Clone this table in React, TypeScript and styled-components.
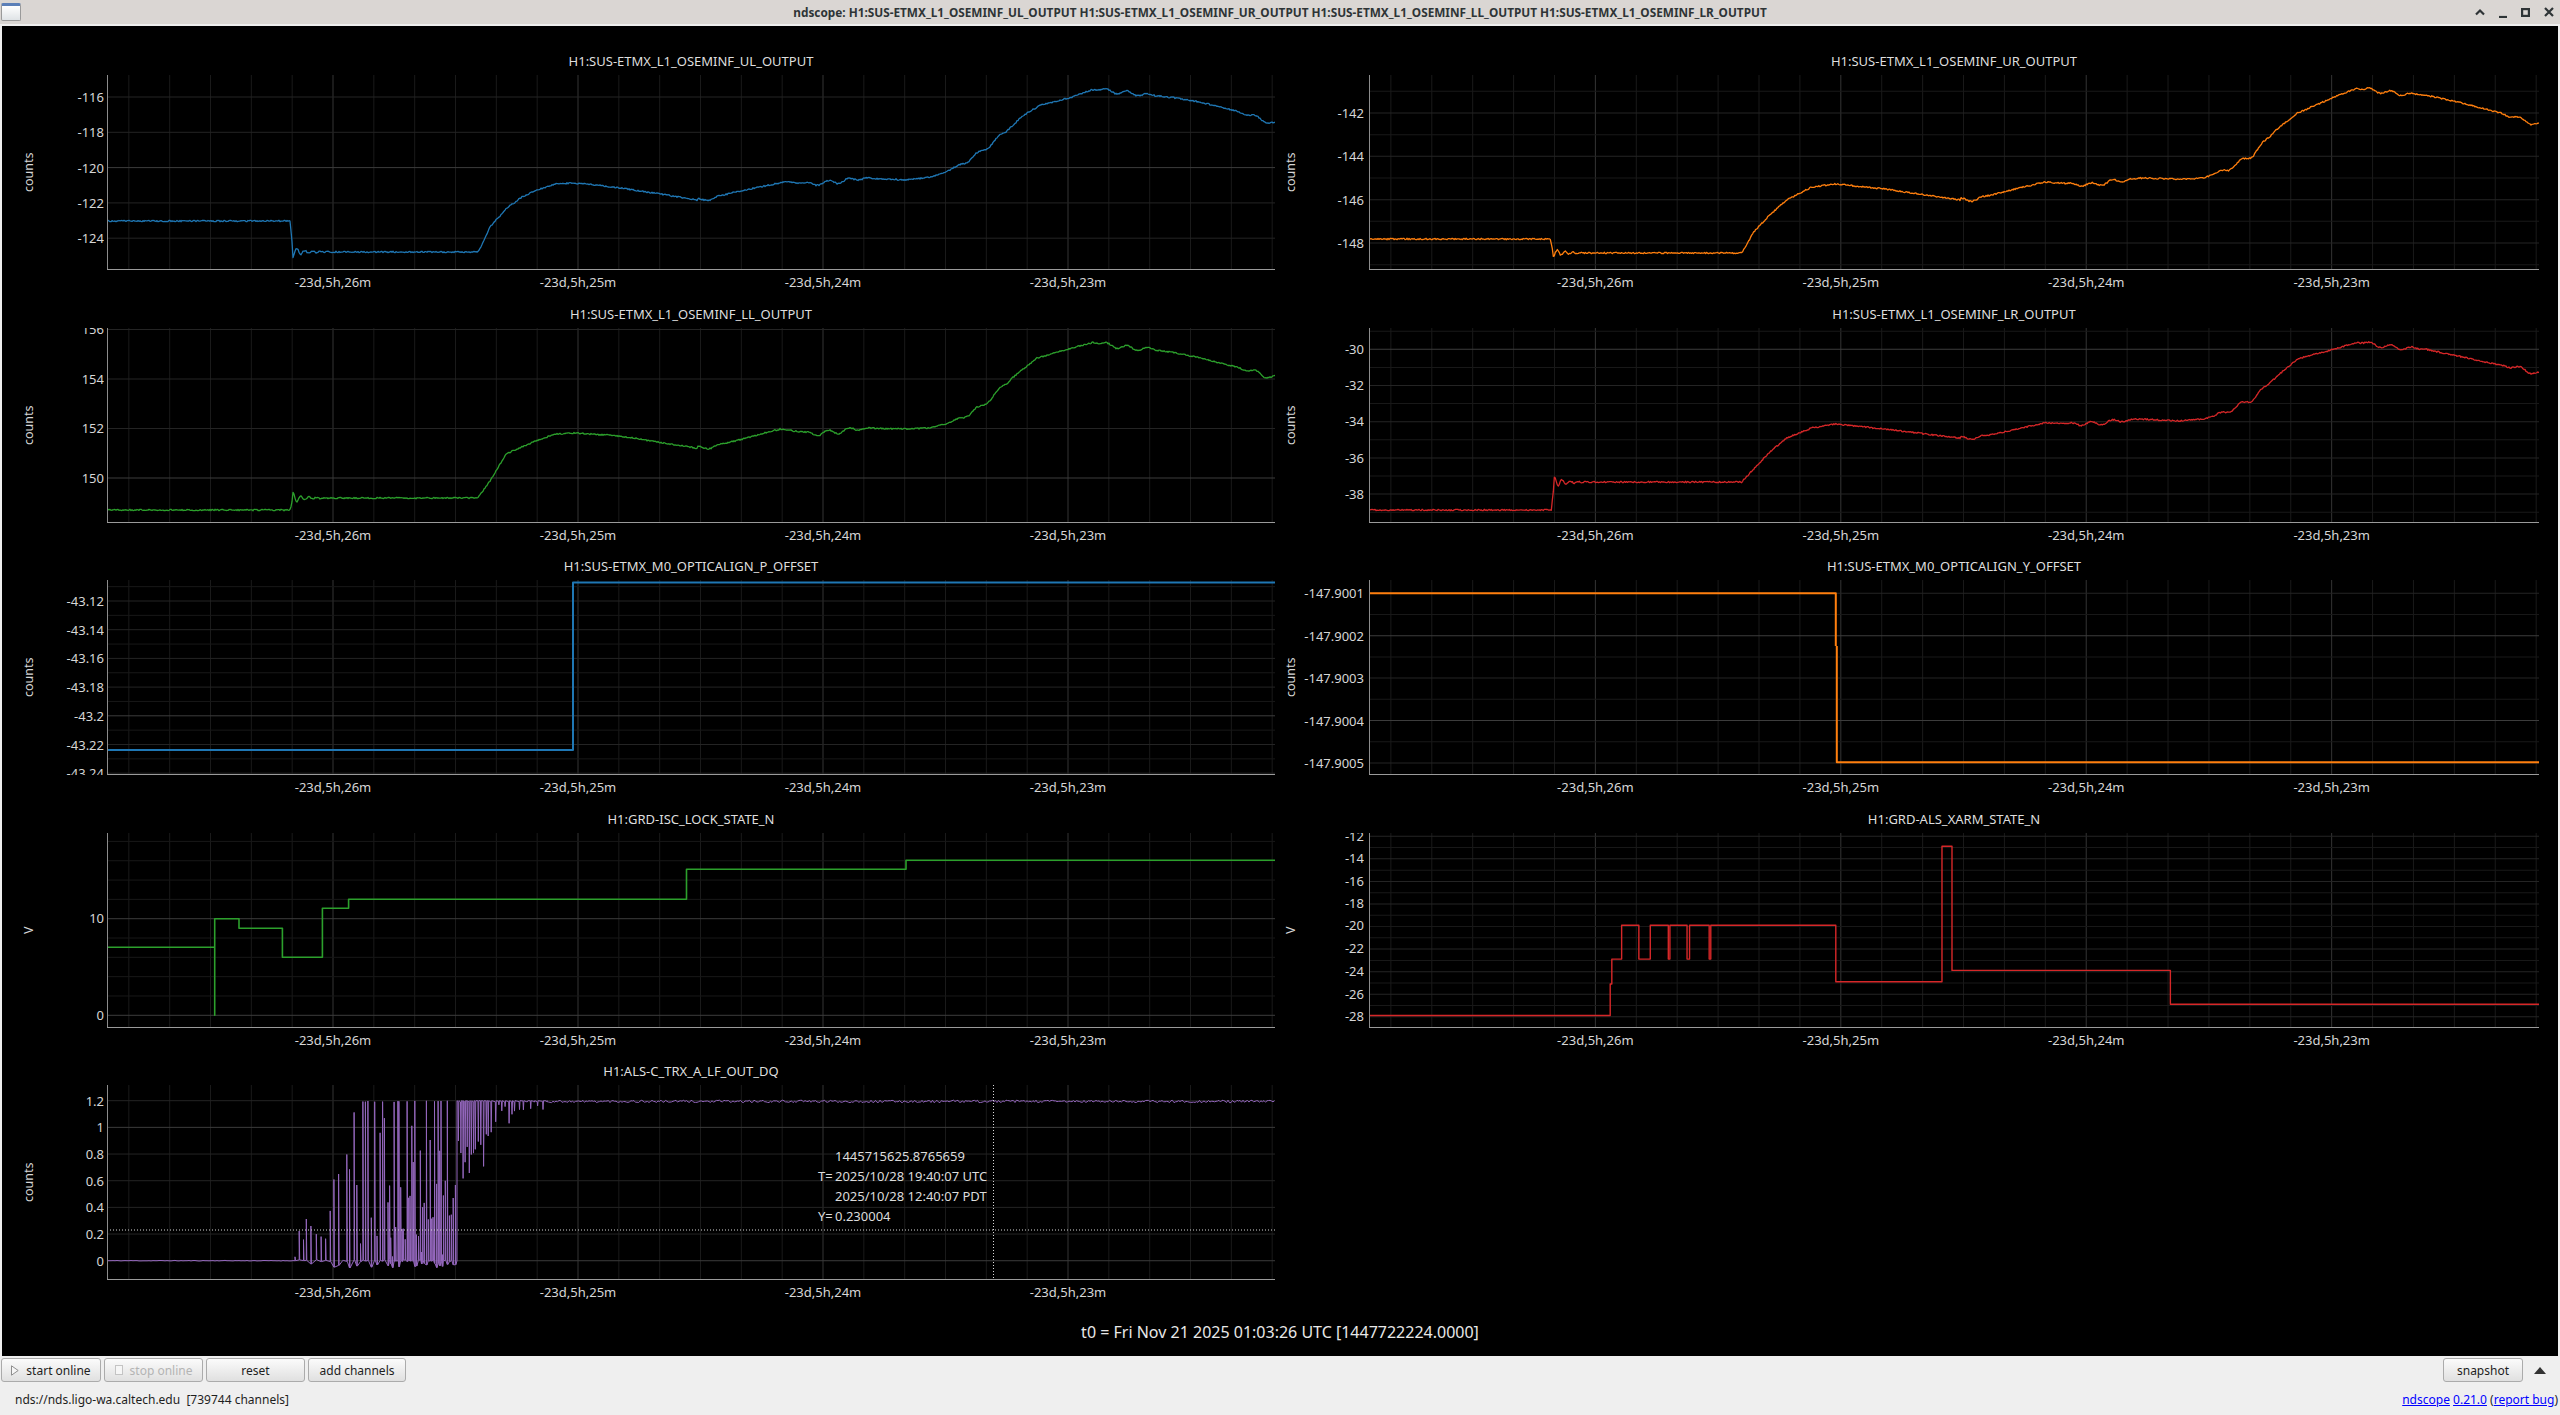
import React from 'react';
import styled, { createGlobalStyle } from 'styled-components';

const BASE_W = 1168;
const PLOT_H = 195;
const MINUTE_X = [226, 471, 716, 961];
const X_LABELS = ['-23d,5h,26m', '-23d,5h,25m', '-23d,5h,24m', '-23d,5h,23m'];

const BLUE = '#1f77b4';
const ORANGE = '#ff7f0e';
const GREEN = '#2ca02c';
const RED = '#d62728';
const PURPLE = '#9467bd';

type Tick = [string, number];

type PlotSpec = {
  title: string;
  unit: string;
  color: string;
  ticks: Tick[];
  step: number;
  majors: number[];
  path: string;
  strokeWidth: number;
  cursor?: boolean;
};

function mulberry(seed: number) {
  let a = seed;
  return () => {
    a = (a + 0x6d2b79f5) | 0;
    let t = Math.imul(a ^ (a >>> 15), 1 | a);
    t = (t + Math.imul(t ^ (t >>> 7), 61 | t)) ^ t;
    return ((t ^ (t >>> 14)) >>> 0) / 4294967296;
  };
}

function lerp(keys: number[][], x: number) {
  for (let i = 1; i < keys.length; i++) {
    if (x <= keys[i][0]) {
      const [x0, y0] = keys[i - 1];
      const [x1, y1] = keys[i];
      const t = x1 === x0 ? 1 : (x - x0) / (x1 - x0);
      return y0 + (y1 - y0) * t;
    }
  }
  return keys[keys.length - 1][1];
}

// slow drifting OSEM signal with a step, ringing and little wiggles
function drift(keys: number[][], seed: number, stepX: number, ring: number, wig: number) {
  const r = mulberry(seed);
  let d = '';
  for (let x = 0; x <= BASE_W; x += 1) {
    let y = lerp(keys, x) + (r() - 0.5) * 1.4;
    if (x >= stepX) {
      const dx = x - stepX;
      y += ring * Math.exp(-dx / 11) * Math.cos(dx * 0.8);
    }
    if (x > 590) y += wig * Math.sin(x / 3.4) * Math.max(0, Math.sin(x / 23 + 1.3));
    d += (x === 0 ? 'M' : 'L') + x + ' ' + y.toFixed(1);
  }
  return d;
}

// ALS transmission: sparse flashes while locking, then a steady level
function alsPath() {
  const r = mulberry(11);
  const Y = (v: number) => (175.7 - v * 133.3).toFixed(1);
  let d = `M0 ${Y(0)}`;
  for (let x = 2; x < 188; x += 2) d += `L${x} ${Y((r() - 0.5) * 0.004)}`;
  let x = 188;
  while (x < 349) {
    const base = r() < 0.25 ? -0.02 - r() * 0.035 : (r() - 0.5) * 0.015;
    const env = x < 230 ? 0.18 + ((x - 188) / 42) * 0.5 : x < 250 ? 0.7 + ((x - 230) / 20) * 0.5 : 1.2;
    let h = env * Math.pow(r(), 0.8);
    if (x > 250 && r() < 0.4) h = 1.2 - r() * 0.01;
    if (x > 280 && r() < 0.35) h = r() * 0.5;
    d += `L${x.toFixed(1)} ${Y(base)}L${x.toFixed(1)} ${Y(h)}L${(x + 0.5).toFixed(1)} ${Y(base)}`;
    const gap = x < 250 ? 2.5 + r() * 3 : x < 280 ? 1.8 + r() * 2 : 1 + r() * 1.3;
    x += gap;
  }
  d += `L350 ${Y(0)}L350 ${Y(1.2)}`;
  x = 351;
  while (x < 440) {
    const t = (x - 350) / 90;
    const depth = x < 383 ? 0.25 + r() * 0.35 : x < 415 ? r() * 0.4 * (1 - t) + 0.02 : 0.04 * Math.sin(x) + 0.03;
    d += `L${x.toFixed(1)} ${Y(1.2 - r() * 0.01)}L${(x + 0.4).toFixed(1)} ${Y(1.2 - depth)}L${(x + 0.9).toFixed(1)} ${Y(1.2)}`;
    x += x < 383 ? 1.6 + r() * 1.5 : 2.5 + r() * 3;
  }
  for (let xx = 440; xx <= BASE_W; xx += 1.5) {
    d += `L${xx.toFixed(1)} ${Y(1.195 + (r() - 0.5) * 0.018)}`;
  }
  return d;
}

const UL_KEYS = [
  [0, 146], [183, 146], [186, 177], [371, 177], [375, 170], [383, 152], [400, 133], [415, 122],
  [430, 115], [448, 109], [464, 108], [490, 110], [513, 113], [560, 120], [595, 126], [628, 117],
  [677, 107], [709, 109], [758, 103], [799, 105], [824, 102], [848, 93], [873, 78], [897, 58],
  [917, 40], [934, 30], [962, 23], [987, 14], [1019, 18], [1044, 20], [1069, 23], [1093, 27],
  [1118, 33], [1142, 40], [1168, 49],
];

const UR_KEYS = [
  [0, 164], [181, 164], [184, 178], [372, 178], [384, 157], [400, 140], [417, 125], [442, 112],
  [466, 109], [515, 114], [597, 126], [629, 118], [674, 107], [719, 110], [768, 103], [809, 104],
  [833, 103], [858, 94], [882, 80], [903, 57], [927, 38], [964, 22], [987, 13], [1021, 18],
  [1054, 20], [1087, 27], [1119, 35], [1152, 45], [1168, 50],
];

const LL_KEYS = [
  [0, 182], [183, 182], [186, 170], [371, 170], [383, 153], [399, 126], [424, 115], [448, 106],
  [469, 105], [513, 108], [595, 121], [628, 113], [673, 101], [709, 106], [758, 100], [799, 101],
  [824, 100], [848, 93], [873, 80], [905, 50], [930, 30], [954, 23], [987, 14], [1019, 20],
  [1044, 21], [1069, 25], [1093, 30], [1126, 38], [1168, 50],
];

const LR_KEYS = [
  [0, 182], [182, 182], [185, 154], [372, 154], [384, 141], [400, 124], [417, 110], [442, 100],
  [466, 96], [515, 101], [597, 111], [629, 105], [674, 95], [719, 96], [768, 91], [809, 93],
  [833, 91], [858, 83], [882, 71], [903, 51], [927, 31], [964, 21], [987, 14], [1021, 19],
  [1054, 21], [1087, 28], [1119, 35], [1152, 41], [1168, 46],
];

const xarm = (v: number) => (92.3 + (-20 - v) * 11.28).toFixed(1);

const LEFT: PlotSpec[] = [
  {
    title: 'H1:SUS-ETMX_L1_OSEMINF_UL_OUTPUT', unit: 'counts', color: BLUE,
    ticks: [['-116', 22], ['-118', 57.3], ['-120', 92.6], ['-122', 127.9], ['-124', 163.2]],
    step: 35.3, majors: [92.6], path: drift(UL_KEYS, 1, 186, 5, 2.2), strokeWidth: 1.3,
  },
  {
    title: 'H1:SUS-ETMX_L1_OSEMINF_LL_OUTPUT', unit: 'counts', color: GREEN,
    ticks: [['156', 1.5], ['154', 51], ['152', 100.5], ['150', 150]],
    step: 49.5, majors: [150], path: drift(LL_KEYS, 3, 186, -5, 2.4), strokeWidth: 1.3,
  },
  {
    title: 'H1:SUS-ETMX_M0_OPTICALIGN_P_OFFSET', unit: 'counts', color: BLUE,
    ticks: [['-43.12', 21], ['-43.14', 49.7], ['-43.16', 78.4], ['-43.18', 107.1], ['-43.2', 135.8], ['-43.22', 164.5], ['-43.24', 193.2]],
    step: 14.35, majors: [135.8], path: 'M0 170H466V2.5H1168', strokeWidth: 2,
  },
  {
    title: 'H1:GRD-ISC_LOCK_STATE_N', unit: 'V', color: GREEN,
    ticks: [['10', 85.7], ['0', 182.3]],
    step: 19.32, majors: [85.7, 182.3],
    path: 'M0 114.3H107.7V182.3V85.7H132V95.3H175.4V124.3H215.4V75.3H241.6V66.3H579.5V36.3H799V27.3H1168',
    strokeWidth: 1.6,
  },
  {
    title: 'H1:ALS-C_TRX_A_LF_OUT_DQ', unit: 'counts', color: PURPLE,
    ticks: [['1.2', 15.7], ['1', 42.3], ['0.8', 69], ['0.6', 95.7], ['0.4', 122.4], ['0.2', 149], ['0', 175.7]],
    step: 26.67, majors: [42.3, 175.7], path: alsPath(), strokeWidth: 1, cursor: true,
  },
];

const RIGHT: PlotSpec[] = [
  {
    title: 'H1:SUS-ETMX_L1_OSEMINF_UR_OUTPUT', unit: 'counts', color: ORANGE,
    ticks: [['-142', 38], ['-144', 81.3], ['-146', 124.6], ['-148', 168]],
    step: 21.67, majors: [], path: drift(UR_KEYS, 2, 184, 4, 2.2), strokeWidth: 1.3,
  },
  {
    title: 'H1:SUS-ETMX_L1_OSEMINF_LR_OUTPUT', unit: 'counts', color: RED,
    ticks: [['-30', 21.3], ['-32', 57.5], ['-34', 93.7], ['-36', 130], ['-38', 166.2]],
    step: 18.1, majors: [21.3], path: drift(LR_KEYS, 4, 185, -5, 2.2), strokeWidth: 1.3,
  },
  {
    title: 'H1:SUS-ETMX_M0_OPTICALIGN_Y_OFFSET', unit: 'counts', color: ORANGE,
    ticks: [['-147.9001', 13.3], ['-147.9002', 55.7], ['-147.9003', 98.2], ['-147.9004', 140.6], ['-147.9005', 183]],
    step: 21.2, majors: [55.7, 140.6], path: 'M0 13.3H466V66M467 66V182.3H1168', strokeWidth: 2,
  },
  {
    title: 'H1:GRD-ALS_XARM_STATE_N', unit: 'V', color: RED,
    ticks: [['-12', 3.3], ['-14', 25.9], ['-16', 48.4], ['-18', 70.8], ['-20', 92.3], ['-22', 115.3], ['-24', 138], ['-26', 161.3], ['-28', 183.7]],
    step: 11.28, majors: [92.3],
    path:
      `M0 ${xarm(-28)}H240.8V${xarm(-25.2)}H242.4V${xarm(-23)}H252.2V${xarm(-20)}H269.4V${xarm(-23)}` +
      `H280.8V${xarm(-20)}H298.8V${xarm(-23)}H300.4V${xarm(-20)}H317.5V${xarm(-23)}H320V${xarm(-20)}` +
      `H339.6V${xarm(-23)}H341.2V${xarm(-20)}H466V${xarm(-25)}H572V${xarm(-13)}H582V${xarm(-24)}` +
      `H800V${xarm(-27)}H1168`,
    strokeWidth: 1.4,
  },
];

const GlobalStyle = createGlobalStyle`
  html, body {
    margin: 0;
    padding: 0;
    background: #efefef;
  }
  body {
    font-family: "Noto Sans", "Open Sans", sans-serif;
  }
`;

const Window = styled.div`
  background: #efefef;
  display: flex;
  flex-direction: column;
  height: 1415px;
  overflow: hidden;
  width: 2560px;
`;

const TitleBar = styled.header`
  align-items: center;
  background: #dad6d3;
  display: grid;
  flex: none;
  grid-template-columns: 1fr auto 1fr;
  height: 24px;
`;

const AppIcon = styled.div`
  background: linear-gradient(#ffffff, #dfe3e6);
  border: 1px solid #9a9a9a;
  border-radius: 2px;
  border-top: 3px solid #5b7fb8;
  box-sizing: border-box;
  height: 18px;
  margin-left: 1px;
  width: 20px;
`;

const TitleText = styled.div`
  color: #2e3436;
  font-size: 11.8px;
  font-weight: 700;
  white-space: nowrap;
`;

const Controls = styled.div`
  display: flex;
  justify-content: flex-end;
`;

const Control = styled.div`
  align-items: center;
  display: flex;
  height: 24px;
  justify-content: center;
  width: 23px;
`;

const Screen = styled.main`
  background: #000;
  box-sizing: border-box;
  display: flex;
  flex: none;
  flex-direction: column;
  height: 1330px;
  margin: 2px 2px 0;
  padding-top: 10px;
`;

const PlotGrid = styled.div`
  display: grid;
  grid-auto-flow: column;
  grid-template-columns: 1282px 1274px;
  grid-template-rows: repeat(5, 252.5px);
`;

const Panel = styled.section<{ $axis: number; $plot: number }>`
  display: grid;
  grid-template-areas:
    '. title'
    'yaxis plot'
    '. xaxis';
  grid-template-columns: ${({ $axis }) => $axis}px ${({ $plot }) => $plot}px;
  grid-template-rows: 39px ${PLOT_H}px 1fr;
`;

const PlotTitle = styled.div`
  color: #dedede;
  font-size: 13px;
  grid-area: title;
  line-height: 18px;
  padding-top: 16px;
  text-align: center;
  white-space: nowrap;
`;

const YAxis = styled.div`
  display: flex;
  grid-area: yaxis;
`;

const YLabel = styled.div<{ $left: number }>`
  align-items: center;
  color: #d6d6d6;
  display: flex;
  font-size: 12.5px;
  justify-content: center;
  line-height: 14px;
  margin-left: ${({ $left }) => $left}px;
  transform: rotate(180deg);
  width: 14px;
  writing-mode: vertical-rl;
`;

const YTicks = styled.div<{ $pad: number }>`
  flex: 1;
  overflow: hidden;
  position: relative;
  margin-right: ${({ $pad }) => $pad}px;
`;

const YTick = styled.span`
  color: #d6d6d6;
  font-size: 13px;
  line-height: 18px;
  position: absolute;
  right: 0;
  white-space: nowrap;
`;

const PlotArea = styled.div`
  grid-area: plot;
  position: relative;
`;

const XAxis = styled.div`
  grid-area: xaxis;
  position: relative;
`;

const XTick = styled.span`
  color: #d6d6d6;
  font-size: 13px;
  line-height: 18px;
  position: absolute;
  top: 3px;
  transform: translateX(-50%);
  white-space: nowrap;
`;

const CursorLabel = styled.div`
  color: #dcdcdc;
  column-gap: 3px;
  display: grid;
  font-size: 13px;
  grid-template-columns: 14px auto;
  left: 711px;
  line-height: 20px;
  position: absolute;
  top: 60.7px;
  white-space: nowrap;
`;

const T0 = styled.div`
  color: #e8e8e8;
  font-size: 16px;
  line-height: 20px;
  padding-top: 23.5px;
  text-align: center;
`;

const BottomBar = styled.footer`
  display: flex;
  flex: 1;
  flex-direction: column;
`;

const ButtonRow = styled.div`
  align-items: center;
  display: flex;
  gap: 3px;
  height: 24px;
  padding: 2px 6px 0 1px;
`;

const Button = styled.button<{ $w: number }>`
  align-items: center;
  background: linear-gradient(#fbfbfb, #e0e0e0);
  border: 1px solid #ababab;
  border-radius: 3px;
  color: ${({ disabled }) => (disabled ? '#b4b4b4' : '#1e1e1e')};
  display: flex;
  font-family: "Noto Sans", "Open Sans", sans-serif;
  font-size: 12px;
  gap: 7px;
  height: 24px;
  justify-content: center;
  padding: 0;
  width: ${({ $w }) => $w}px;
`;

const Spacer = styled.div`
  flex: 1;
`;

const Expand = styled.div`
  display: flex;
  justify-content: center;
  width: 28px;
`;

const StatusRow = styled.div`
  align-items: center;
  color: #1e1e1e;
  display: flex;
  font-size: 12px;
  justify-content: space-between;
  line-height: 20px;
  padding: 8px 2px 0 15px;
  white-space: pre;
`;

const Link = styled.a`
  color: #0000ff;
  text-decoration: underline;
`;

function Grid({ spec }: { spec: PlotSpec }) {
  const vertical: React.ReactNode[] = [];
  const step10 = 245 / 6;
  for (let j = -6; j < 30; j++) {
    const x = 226 + j * step10;
    if (x < 0 || x > BASE_W) continue;
    const minute = ((j % 6) + 6) % 6 === 0;
    vertical.push(
      <line key={`v${j}`} x1={x} x2={x} y1={0} y2={PLOT_H} stroke={minute ? '#343434' : '#1a1a1a'} strokeWidth={1} />,
    );
  }
  const horizontal: React.ReactNode[] = [];
  const first = spec.ticks[0][1];
  const labelled = spec.ticks.map((t) => t[1]);
  for (let k = -30; k < 60; k++) {
    const y = first + k * spec.step;
    if (y < 0 || y > PLOT_H) continue;
    const isMajor = spec.majors.some((m) => Math.abs(m - y) < 1);
    const isTick = labelled.some((m) => Math.abs(m - y) < 1);
    horizontal.push(
      <line
        key={`h${k}`}
        x1={0}
        x2={BASE_W}
        y1={y}
        y2={y}
        stroke={isMajor ? '#3c3c3c' : isTick ? '#242424' : '#181818'}
        strokeWidth={1}
      />,
    );
  }
  return (
    <g>
      {vertical}
      {horizontal}
    </g>
  );
}

function PlotPanel({ spec, axis, plot, labelLeft, tickPad }: { spec: PlotSpec; axis: number; plot: number; labelLeft: number; tickPad: number }) {
  const sx = plot / BASE_W;
  return (
    <Panel $axis={axis} $plot={plot}>
      <PlotTitle>{spec.title}</PlotTitle>
      <YAxis>
        <YLabel $left={labelLeft}>{spec.unit}</YLabel>
        <YTicks $pad={tickPad}>
          {spec.ticks.map(([label, y]) => (
            <YTick key={label} style={{ top: y - 9 }}>
              {label}
            </YTick>
          ))}
        </YTicks>
      </YAxis>
      <PlotArea>
        <svg width={plot} height={PLOT_H} viewBox={`0 0 ${BASE_W} ${PLOT_H}`} preserveAspectRatio="none" style={{ display: 'block' }}>
          <Grid spec={spec} />
          <path d={spec.path} fill="none" stroke={spec.color} strokeWidth={spec.strokeWidth} strokeLinejoin="round" />
          {spec.cursor && (
            <g stroke="#d8d8d8" strokeWidth={1} strokeDasharray="1 2">
              <line x1={886.5} x2={886.5} y1={0} y2={PLOT_H} />
              <line x1={0} x2={BASE_W} y1={145} y2={145} />
            </g>
          )}
          <line x1={0.5} x2={0.5} y1={0} y2={PLOT_H} stroke="#8c8c8c" strokeWidth={1} />
          <line x1={0} x2={BASE_W} y1={PLOT_H - 0.5} y2={PLOT_H - 0.5} stroke="#9a9a9a" strokeWidth={1.2} />
        </svg>
        {spec.cursor && (
          <CursorLabel>
            <span />
            <span>1445715625.8765659</span>
            <span>T=</span>
            <span>2025/10/28 19:40:07 UTC</span>
            <span />
            <span>2025/10/28 12:40:07 PDT</span>
            <span>Y=</span>
            <span>0.230004</span>
          </CursorLabel>
        )}
      </PlotArea>
      <XAxis>
        {MINUTE_X.map((x, i) => (
          <XTick key={X_LABELS[i]} style={{ left: x * sx }}>
            {X_LABELS[i]}
          </XTick>
        ))}
      </XAxis>
    </Panel>
  );
}

export default function App() {
  return (
    <>
      <GlobalStyle />
      <Window>
        <TitleBar>
          <AppIcon />
          <TitleText>
            ndscope: H1:SUS-ETMX_L1_OSEMINF_UL_OUTPUT H1:SUS-ETMX_L1_OSEMINF_UR_OUTPUT H1:SUS-ETMX_L1_OSEMINF_LL_OUTPUT
            H1:SUS-ETMX_L1_OSEMINF_LR_OUTPUT
          </TitleText>
          <Controls>
            <Control>
              <svg width="10" height="8" viewBox="0 0 10 8">
                <path d="M1 6.5L5 2.5L9 6.5" fill="none" stroke="#2e3436" strokeWidth="2.2" />
              </svg>
            </Control>
            <Control>
              <svg width="10" height="12" viewBox="0 0 10 12">
                <path d="M1 11H9" fill="none" stroke="#2e3436" strokeWidth="2.2" />
              </svg>
            </Control>
            <Control>
              <svg width="9" height="9" viewBox="0 0 9 9">
                <rect x="1.1" y="1.1" width="6.8" height="6.8" fill="none" stroke="#2e3436" strokeWidth="2.2" />
              </svg>
            </Control>
            <Control>
              <svg width="10" height="10" viewBox="0 0 10 10">
                <path d="M1 1L9 9M9 1L1 9" fill="none" stroke="#2e3436" strokeWidth="2.2" />
              </svg>
            </Control>
          </Controls>
        </TitleBar>
        <Screen>
          <PlotGrid>
            {LEFT.map((spec) => (
              <PlotPanel key={spec.title} spec={spec} axis={105} plot={1168} labelLeft={20} tickPad={3} />
            ))}
            {RIGHT.map((spec) => (
              <PlotPanel key={spec.title} spec={spec} axis={85} plot={1170} labelLeft={0} tickPad={5} />
            ))}
          </PlotGrid>
          <T0>t0 = Fri Nov 21 2025 01:03:26 UTC [1447722224.0000]</T0>
        </Screen>
        <BottomBar>
          <ButtonRow>
            <Button $w={100}>
              <svg width="8" height="11" viewBox="0 0 8 11">
                <path d="M0.5 0.8L7.2 5.5L0.5 10.2Z" fill="#f6f6f6" stroke="#8e8e8e" strokeWidth="1" />
              </svg>
              start online
            </Button>
            <Button $w={99} disabled>
              <svg width="8" height="10" viewBox="0 0 8 10">
                <rect x="0.5" y="0.5" width="7" height="9" fill="#f6f6f6" stroke="#c4c4c4" strokeWidth="1" />
              </svg>
              stop online
            </Button>
            <Button $w={99}>reset</Button>
            <Button $w={98}>add channels</Button>
            <Spacer />
            <Button $w={80}>snapshot</Button>
            <Expand>
              <svg width="12" height="7" viewBox="0 0 12 7">
                <path d="M0 7L6 0L12 7Z" fill="#333" />
              </svg>
            </Expand>
          </ButtonRow>
          <StatusRow>
            <span>nds://nds.ligo-wa.caltech.edu  [739744 channels]</span>
            <span>
              <Link href="#">ndscope</Link> <Link href="#">0.21.0</Link> (<Link href="#">report bug</Link>)
            </span>
          </StatusRow>
        </BottomBar>
      </Window>
    </>
  );
}
